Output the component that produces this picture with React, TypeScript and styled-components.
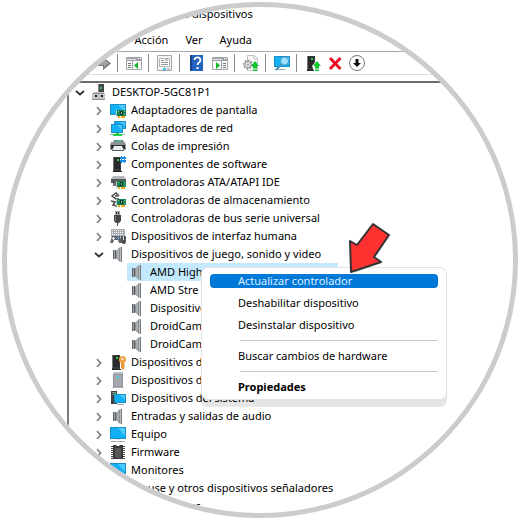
import React from "react";
import styled, { createGlobalStyle } from "styled-components";

const GlobalStyle = createGlobalStyle`
  * { box-sizing: border-box; }
  body {
    margin: 0;
    background: #fff;
    color: #000;
    font: 11px/18px "Noto Sans", "Open Sans", sans-serif;
  }
  button {
    margin: 0;
    padding: 0;
    border: 0;
    background: none;
    color: inherit;
    font: inherit;
    text-align: left;
    white-space: nowrap;
  }
`;

const Page = styled.main`
  padding: 2px;
`;

const Lens = styled.section`
  width: 100%;
  aspect-ratio: 1;
  border: 5px solid #ccc;
  border-radius: 50%;
  overflow: hidden;
  display: flex;
  flex-direction: column;
  background: #fff;
`;

const TitleBar = styled.h1`
  margin: 0;
  padding-left: 92px;
  font-size: 11px;
  line-height: 14px;
  font-weight: 400;
  white-space: nowrap;
`;

const MenuBar = styled.nav`
  display: flex;
  gap: 17px;
  padding: 10px 0 2px 72px;
`;

const Toolbar = styled.div`
  display: flex;
  align-items: center;
  height: 24px;
  padding-left: 88px;
  border-top: 1px solid #a8a8a8;
  border-bottom: 1px solid #dcdcdc;
`;

const ToolGroup = styled.div<{ $tight?: boolean }>`
  display: flex;
  gap: ${(p) => (p.$tight ? 6 : 8)}px;
  padding-right: 6px;

  & + & {
    padding-left: 8px;
    border-left: 1px solid #8c8c8c;
  }
`;

const ToolButton = styled.button`
  display: flex;
  height: 18px;
  align-items: center;
`;

const Panel = styled.div`
  flex: 1;
  min-height: 0;
  margin: 6px 0 0 60px;
  border-top: 2px solid #6e6e6e;
  border-left: 2px solid #7a7a7a;
`;

const Branch = styled.ul`
  margin: 0;
  padding: 0;
  list-style: none;
`;

const Leaf = styled.li<{ $level: number }>`
  position: relative;
  display: flex;
  align-items: center;
  height: 18px;
  padding-left: ${(p) => p.$level * 19 + 2}px;
`;

const Twist = styled.button`
  display: flex;
  flex: none;
  width: 18px;
  height: 18px;
  align-items: center;
  justify-content: center;
`;

const Node = styled.span<{ $selected?: boolean }>`
  display: flex;
  align-items: center;
  gap: 5px;
  height: 18px;
  min-width: ${(p) => (p.$selected ? 211 : 0)}px;
  padding: 0 2px;
  white-space: nowrap;
  background: ${(p) => (p.$selected ? "#c3e9ff" : "transparent")};
`;

const Popup = styled.div`
  position: absolute;
  z-index: 2;
  left: 132px;
  top: 4px;
  display: flex;
  flex-direction: column;
  gap: 8px;
  width: 246px;
  padding: 6px 8px 5px;
  border: 1px solid #e2e2e2;
  border-radius: 7px;
  background: #fff;
  box-shadow: 0 7px 1px rgba(0, 0, 0, 0.1);
`;

const Command = styled.button<{ $active?: boolean; $strong?: boolean }>`
  height: 14px;
  padding-left: 28px;
  border-radius: 4px;
  line-height: 14px;
  font-weight: ${(p) => (p.$strong ? 700 : 400)};
  color: ${(p) => (p.$active ? "#d9efff" : "#000")};
  background: ${(p) => (p.$active ? "#0078d7" : "transparent")};
`;

const Rule = styled.hr`
  width: 100%;
  margin: 0;
  border: 0;
  padding-left: 30px;
  height: 1px;
  background: #c8c8c8 content-box;
`;

const Pointer = styled.svg`
  position: absolute;
  z-index: 3;
  left: 276px;
  top: -43px;
`;

const Icon = ({ children }: { children: React.ReactNode }) => (
  <svg width="16" height="16" viewBox="0 0 16 16" aria-hidden="true">
    {children}
  </svg>
);

const Card = ({ y = 7 }: { y?: number }) => (
  <g transform={`translate(6 ${y})`}>
    <path d="M0 0h1V7H0z" fill="#b9c4c4" />
    <path d="M1 0h9v6H1z" fill="#16814e" />
    <path d="M2 1h1v1H2zM8 1h1v1H8zM8 4h1v1H8z" fill="#6fd59b" />
    <path d="M4 1h3v4H4z" fill="#0c3b2c" />
    <path d="M5 2h1v2H5z" fill="#7fc8a5" />
    <path d="M2 6h2v2H2zM5 6h4v2H5z" fill="#f2a81d" />
  </g>
);

const Screen = ({ x = 0, y = 2, w = 16, h = 11 }) => (
  <g>
    <rect x={x} y={y} width={w} height={h} fill="#1c8dc0" />
    <rect x={x + 1} y={y + 1} width={w - 2} height={h - 2} fill="#12b0f5" />
    <path d={`M${x + w / 2} ${y + 1}h${w / 2 - 1}v${h - 4}z`} fill="#4bcaff" />
  </g>
);

const Tower = ({ x = 3 }) => (
  <g transform={`translate(${x} 0)`}>
    <path d="M0 1h8v14H0z" fill="#3b3b3d" />
    <path d="M1 2h6v11H1z" fill="#29292b" />
    <path d="M0 1h1v13H0z" fill="#777" />
    <path d="M4 3h2v2H4z" fill="#20d64c" />
    <path d="M0 15h9v1H0z" fill="#222" />
  </g>
);

const UpArrow = () => (
  <path d="M12 6 16 11h-2v2h-4v-2H8zM10 13.500h4v1h-4zM10 15h4v1h-4z" fill="#0cc52c" />
);

const Speaker = () => (
  <Icon>
    <path d="M3 4h3v9H3z" fill="#5f6368" />
    <path d="M4 4h1v9H4z" fill="#9ca1a6" />
    <path d="M6 5l4-4v15l-4-4z" fill="#8a8f94" />
    <path d="M7 4.500 9 3v11l-2-2z" fill="#a9aeb2" />
    <path d="M10 1h2v15h-2z" fill="#b9bdc0" />
    <path d="M11 1h1v15h-1z" fill="#777b80" />
  </Icon>
);

const icons: Record<string, React.ReactNode> = {
  computer: (
    <Icon>
      <path d="M7 0h6v10H7z" fill="#444547" />
      <path d="M7 0h1v9H7z" fill="#888" />
      <path d="M9 3h2v2H9z" fill="#2bd158" />
      <path d="M3 8h10l1 2v6H1v-6z" fill="#c1c3c5" />
      <path d="M2 9h11v1H2z" fill="#8e9193" />
      <path d="M1 15h13v1H1z" fill="#8e9091" />
      <path d="M4 11h2v2H4zM10 11h2v2h-2z" fill="#222" />
    </Icon>
  ),
  display: (
    <Icon>
      <Screen />
      <Card y={8} />
    </Icon>
  ),
  network: (
    <Icon>
      <Screen x={4} y={1} w={12} h={8} />
      <Screen x={1} y={4} w={12} h={9} />
      <path d="M0 14h15v1H0z" fill="#9bb8a4" />
      <path d="M6 13h3v1h3v2H3v-2h3z" fill="#21d044" />
    </Icon>
  ),
  printer: (
    <Icon>
      <path d="M4 2h9l1 3H3z" fill="#6a7173" />
      <path d="M5 2h7v2H5z" fill="#55ab95" />
      <path d="M1 4h14l1 3v5H0V7z" fill="#8f9497" />
      <path d="M1 7h14v4H1z" fill="#2c3032" />
      <path d="M4 8h8l2 5H2z" fill="#eceeef" />
      <path d="M2 12h12v1H2z" fill="#55595d" />
    </Icon>
  ),
  software: (
    <Icon>
      <Tower />
      <path d="M10 0h6v7h-5V5h-1z" fill="#fff" />
      <path d="M11 0h1v7h-1zM14 0h1v7h-1zM10 1h6v2h-6zM10 4h6v2h-6z" fill="#168ee8" />
    </Icon>
  ),
  ata: (
    <Icon>
      <path d="M3 2h11l2 3v3H1V5z" fill="#b8bbbd" />
      <path d="M1 5h15v4H1z" fill="#54585b" />
      <path d="M3 9h4v3H3z" fill="#707477" />
      <Card y={7} />
    </Icon>
  ),
  storage: (
    <Icon>
      <path d="M9 4 6 1 2 4l4 3h3M1 9l4 1-2 3 4 1" fill="none" stroke="#48494b" strokeWidth="1.500" />
      <path d="M5 3h3v2H5z" fill="#777" />
      <Card y={7} />
    </Icon>
  ),
  usb: (
    <Icon>
      <path d="M5 1h5v5H5z" fill="#a5a6a8" />
      <path d="M6 2h1v2H6zM8 2h1v2H8z" fill="#333" />
      <path d="M4 5h7v6l-2 2H6l-2-2z" fill="#444547" />
      <path d="M5 6h1v5H5z" fill="#777" />
      <path d="M7 13h1v3H7z" fill="#555" />
    </Icon>
  ),
  hid: (
    <Icon>
      <path d="M1 1h14v8H1z" fill="#a8adb2" />
      <path d="M2 2.500h12M2 4.500h12M2 6.500h12" stroke="#f4f5f6" strokeDasharray="1 1" />
      <path d="M2 8h8l2 7H9l-1-3H4l-1 3H0z" fill="#62676e" />
      <path d="M3 9h1v1h1v1H4v1H3v-1H2v-1h1z" fill="#eee" />
      <path d="M7 9h2v2H7z" fill="#3fa1ef" />
      <path d="M11 8h5v6l-1 2h-2l-2-2z" fill="#4e5156" />
      <path d="M13 8h1v4h-1z" fill="#d3d5d7" />
    </Icon>
  ),
  sound: <Speaker />,
  security: (
    <Icon>
      <Tower x={2} />
      <path d="M11 8h3v2h1v1h-1v1h1v1h-1v2l-1 1-2-2z" fill="#e99a37" />
      <circle cx="12.500" cy="5.500" r="3.500" fill="#eea445" />
      <circle cx="12.500" cy="5" r="1" fill="#fff" />
    </Icon>
  ),
  device: (
    <Icon>
      <path d="M5 0h8v15H3V2z" fill="#8d9399" />
      <path d="M5 0h8l-1 2H3z" fill="#b9bec2" />
      <path d="M4 3h8v11H4z" fill="#a2a8ad" />
      <path d="M7 4h2v2H7z" fill="#2ed3ed" />
      <path d="M2 15h12v1H2z" fill="#bbb" />
    </Icon>
  ),
  system: (
    <Icon>
      <path d="M1 1h6v13H1z" fill="#3e4042" />
      <path d="M2 2h4v1H2zM2 4h3v1H2z" fill="#8b8f92" />
      <path d="M4 3h2v1H4z" fill="#25cf55" />
      <Screen x={4} y={4} w={12} h={9} />
      <path d="M7 14h7v1H7z" fill="#9eafb7" />
    </Icon>
  ),
  monitor: (
    <Icon>
      <Screen y={1} h={12} />
      <path d="M6 13h4v1H6z" fill="#e1e5e7" />
      <path d="M1 15h14v1H1z" fill="#9eabb2" />
    </Icon>
  ),
  firmware: (
    <Icon>
      <path d="M2 2v14M14 2v14" stroke="#444" strokeWidth="2" strokeDasharray="1 1" />
      <path d="M3 1h3l1 1h2l1-1h3v14H3z" fill="#39393b" />
      <path d="M5 4h6v10H5z" fill="#57575a" />
    </Icon>
  ),
};

const PaneWindow = ({ flip }: { flip?: boolean }) => (
  <Icon>
    <path d="M.5 2.500h15v12H.5z" fill="#fafafa" stroke="#a3a6a9" />
    <path d="M1 3h14v3H1z" fill="#a0a4a8" />
    <path d="M1 4.500h9" stroke="#e5e5e5" />
    <path d="M12 3h1v1h-1zM14 3h1v1h-1z" fill="#fff" />
    {flip ? (
      <>
        <path d="M9.500 6v8" stroke="#a3a6a9" />
        <path d="M11 8.500h3M11 10.500h3M11 12.500h3" stroke="#6f7880" />
        <path d="M4 7 8 10.500 4 14z" fill="#0bb92b" />
      </>
    ) : (
      <>
        <path d="M6.500 6v8" stroke="#a3a6a9" />
        <path d="M2 8.500h3M2 10.500h3M2 12.500h3" stroke="#6f7880" />
        <path d="M12 7 8 10.500 12 14z" fill="#0bb92b" />
      </>
    )}
  </Icon>
);

type Tool = { name: string; art: React.ReactNode };

const tools: { tight?: boolean; items: Tool[] }[] = [
  {
    items: [
      {
        name: "Adelante",
        art: (
          <Icon>
            <path d="M0 6h8V2l8 6.500L8 15v-4H0z" fill="#777" />
            <path d="M1 7h8V4.500l5 4L9 12v-2H1z" fill="#a3a3a3" />
          </Icon>
        ),
      },
    ],
  },
  { items: [{ name: "Mostrar u ocultar árbol", art: <PaneWindow /> }] },
  {
    items: [
      {
        name: "Propiedades",
        art: (
          <Icon>
            <path d="M.5.500h14v15H.5z" fill="#f5f5f5" stroke="#a3a7aa" />
            <path d="M2.500 3.500h10v8h-10z" fill="#fff" stroke="#b0b4b7" />
            <path d="M4 5.500h3M4 7.500h7M4 9.500h7" stroke="#8f969b" />
            <path d="M8 5h3" stroke="#c4c7c9" strokeWidth="2" />
            <path d="M6 13h3v2H6z" fill="#3db9e9" />
            <path d="M10 13h3v2h-3z" fill="#c4c7c9" />
          </Icon>
        ),
      },
    ],
  },
  {
    items: [
      {
        name: "Ayuda",
        art: (
          <Icon>
            <path d="M2 0h13v16H2z" fill="#2362bd" />
            <path d="M2 0h2v16H2z" fill="#174486" />
            <path d="M6.500 5c0-3.500 6-3.500 6 0 0 2.500-3 2.500-3 5" fill="none" stroke="#fff" strokeWidth="1.800" />
            <path d="M8.500 12h2v2h-2z" fill="#fff" />
          </Icon>
        ),
      },
      { name: "Mostrar acciones", art: <PaneWindow flip /> },
    ],
  },
  {
    items: [
      {
        name: "Actualizar controladores",
        art: (
          <Icon>
            <path d="M4.500.500h7l3 3v12h-10z" fill="#fafafa" stroke="#bfc2c4" />
            <path d="M11 1v3h3" fill="none" stroke="#bfc2c4" />
            <circle cx="5" cy="9.500" r="4" fill="none" stroke="#a0a4a7" strokeWidth="2" strokeDasharray="2 1" />
            <circle cx="5" cy="9.500" r="3" fill="#eee" stroke="#8b8f92" />
            <circle cx="5" cy="9.500" r="1" fill="#8b8f92" />
            <UpArrow />
          </Icon>
        ),
      },
    ],
  },
  {
    items: [
      {
        name: "Buscar cambios de hardware",
        art: (
          <Icon>
            <Screen y={1} h={11} />
            <path d="M1 14h10v1H1z" fill="#9aa7ae" />
            <path d="m8 9-6 6" stroke="#4796bd" strokeWidth="2" />
            <circle cx="10.500" cy="6" r="4" fill="#9ce0fb" stroke="#4b9fc7" />
          </Icon>
        ),
      },
    ],
  },
  {
    tight: true,
    items: [
      {
        name: "Habilitar dispositivo",
        art: (
          <Icon>
            <Tower x={2} />
            <path d="M12 5 7 11l2 5h7V9z" fill="#fff" />
            <UpArrow />
          </Icon>
        ),
      },
      {
        name: "Desinstalar dispositivo",
        art: (
          <Icon>
            <path d="m3 3 10.500 11M13.500 3 3 14" stroke="#e81123" strokeWidth="3" />
          </Icon>
        ),
      },
      {
        name: "Deshabilitar dispositivo",
        art: (
          <Icon>
            <circle cx="8" cy="8" r="7.500" fill="#fff" stroke="#777" />
            <path d="M6.500 4h3v4H12l-4 4-4-4h2.500z" fill="#111" />
          </Icon>
        ),
      },
    ],
  },
];

const nodes: { level: number; icon: string; text: string; open?: boolean; selected?: boolean }[] = [
  { level: 0, icon: "computer", text: "DESKTOP-5GC81P1", open: true },
  { level: 1, icon: "display", text: "Adaptadores de pantalla" },
  { level: 1, icon: "network", text: "Adaptadores de red" },
  { level: 1, icon: "printer", text: "Colas de impresión" },
  { level: 1, icon: "software", text: "Componentes de software" },
  { level: 1, icon: "ata", text: "Controladoras ATA/ATAPI IDE" },
  { level: 1, icon: "storage", text: "Controladoras de almacenamiento" },
  { level: 1, icon: "usb", text: "Controladoras de bus serie universal" },
  { level: 1, icon: "hid", text: "Dispositivos de interfaz humana" },
  { level: 1, icon: "sound", text: "Dispositivos de juego, sonido y video", open: true },
  { level: 2, icon: "sound", text: "AMD High", selected: true },
  { level: 2, icon: "sound", text: "AMD Stre" },
  { level: 2, icon: "sound", text: "Dispositivo" },
  { level: 2, icon: "sound", text: "DroidCam" },
  { level: 2, icon: "sound", text: "DroidCam" },
  { level: 1, icon: "security", text: "Dispositivos de" },
  { level: 1, icon: "device", text: "Dispositivos de" },
  { level: 1, icon: "system", text: "Dispositivos del sistema" },
  { level: 1, icon: "sound", text: "Entradas y salidas de audio" },
  { level: 1, icon: "monitor", text: "Equipo" },
  { level: 1, icon: "firmware", text: "Firmware" },
  { level: 1, icon: "monitor", text: "Monitores" },
  { level: 1, icon: "device", text: "Mouse y otros dispositivos señaladores" },
  { level: 1, icon: "firmware", text: "Procesadores" },
];

const Chevron = ({ open }: { open?: boolean }) => (
  <svg width="10" height="10" viewBox="0 0 10 10" aria-hidden="true">
    {open ? (
      <path d="M1 4l4 3.500L9 4" fill="none" stroke="#333" strokeWidth="1.800" />
    ) : (
      <path d="m3 2 3.500 4L3 10" fill="none" stroke="#858585" strokeWidth="1.800" />
    )}
  </svg>
);

const ContextMenu = () => (
  <Popup role="menu">
    <Command role="menuitem" $active>Actualizar controlador</Command>
    <Command role="menuitem">Deshabilitar dispositivo</Command>
    <Command role="menuitem">Desinstalar dispositivo</Command>
    <Rule />
    <Command role="menuitem">Buscar cambios de hardware</Command>
    <Rule />
    <Command role="menuitem" $strong>Propiedades</Command>
  </Popup>
);

const RedArrow = () => (
  <Pointer width="48" height="54" viewBox="0 0 48 54" aria-hidden="true">
    <path d="m30 6 14 10-14 22 7 5L9 53z" fill="#000" opacity=".12" />
    <path
      d="M28 4 44 15 29 37l7 5L6 52 5 21l7 4z"
      fill="#ff3131"
      stroke="#333"
      strokeWidth="2"
      strokeLinejoin="round"
    />
  </Pointer>
);

export default function App() {
  return (
    <Page>
      <GlobalStyle />
      <Lens>
        <TitleBar>Administrador de dispositivos</TitleBar>
        <MenuBar>
          {["Archivo", "Acción", "Ver", "Ayuda"].map((name) => (
            <button key={name}>{name}</button>
          ))}
        </MenuBar>
        <Toolbar role="toolbar">
          {tools.map((group, i) => (
            <ToolGroup key={i} $tight={group.tight}>
              {group.items.map((tool) => (
                <ToolButton key={tool.name} aria-label={tool.name}>
                  {tool.art}
                </ToolButton>
              ))}
            </ToolGroup>
          ))}
        </Toolbar>
        <Panel>
          <Branch role="tree">
            {nodes.map((node, i) => (
              <Leaf key={i} $level={node.level} role="treeitem" aria-level={node.level + 1}>
                {node.level < 2 ? (
                  <Twist aria-label={`Expandir ${node.text}`}>
                    <Chevron open={node.open} />
                  </Twist>
                ) : (
                  <Twist as="span" />
                )}
                <Node $selected={node.selected}>
                  {icons[node.icon]}
                  {node.text}
                </Node>
                {node.selected && (
                  <>
                    <ContextMenu />
                    <RedArrow />
                  </>
                )}
              </Leaf>
            ))}
          </Branch>
        </Panel>
      </Lens>
    </Page>
  );
}
